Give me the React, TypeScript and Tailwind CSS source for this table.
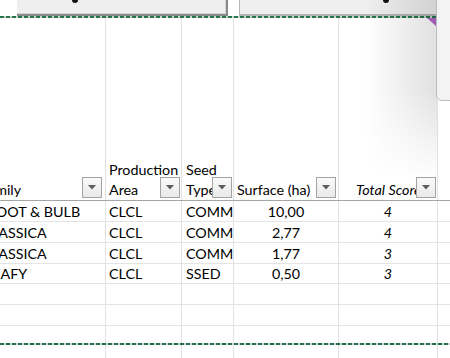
import React from 'react';

const rows = [
  { fam: 'ROOT & BULB', off: '-ml-[13px]', area: 'CLCL', seed: 'COMM', surf: '10,00', score: '4', h: 'h-[21px]' },
  { fam: 'BRASSICA', off: '-ml-[20px]', area: 'CLCL', seed: 'COMM', surf: '2,77', score: '4', h: 'h-[21px]' },
  { fam: 'BRASSICA', off: '-ml-[20px]', area: 'CLCL', seed: 'COMM', surf: '1,77', score: '3', h: 'h-[21px]' },
  { fam: 'LEAFY', off: '-ml-[15px]', area: 'CLCL', seed: 'SSED', surf: '0,50', score: '3', h: 'h-[20px]' },
];

const dashed =
  'bg-[repeating-linear-gradient(90deg,#25744a_0px,#25744a_4px,#c9d6cf_4px,#c9d6cf_6px)]';

function FilterButton({ className = '' }: { className?: string }) {
  return (
    <div
      className={`absolute bottom-[2px] w-[20px] h-[21px] border border-[#a3a3a3] bg-gradient-to-b from-[#fafafa] to-[#e9e9e9] flex items-center justify-center ${className}`}
    >
      <svg width="8" height="5" viewBox="0 0 8 5">
        <path d="M0 0h8L4 4.5z" fill="#5c5c5c" />
      </svg>
    </div>
  );
}

export default function App() {
  return (
    <div className="relative w-[450px] h-[358px] overflow-hidden bg-white font-['Lato',sans-serif] text-[14.3px] text-black">
      {/* Top buttons */}
      <div className="flex h-[16px]">
        <div className="ml-[17px] w-[211px] h-[16px] bg-[#efefef] border-r-2 border-b-2 border-[#8a8a8a] shadow-[inset_-1px_-1px_0_#d6d6d6]">
          <div className="ml-[55px] w-[6px] h-[3px] rounded-b-full bg-[#111]" />
        </div>
        <div className="ml-[11px] w-[198px] h-[16px] bg-[#efefef] border-l border-b-2 border-[#b5b5b5]">
          <div className="ml-[143px] w-[6px] h-[3px] rounded-b-full bg-[#111]" />
        </div>
      </div>
      <div className={`h-[2px] w-[437px] ${dashed}`} />

      {/* Grid */}
      <div className="flex flex-col">
        {/* Header row */}
        <div className="flex h-[183px] border-b border-[#a6a6a6] leading-[20px]">
          <div className="relative w-[106px] shrink-0 border-r border-[#e1e1e1] flex items-end overflow-hidden">
            <span className="-ml-[19px] whitespace-nowrap">Family</span>
            <FilterButton className="right-[3px]" />
          </div>
          <div className="relative w-[76px] shrink-0 border-r border-[#e1e1e1] flex items-end pl-[3px]">
            <span>
              Production
              <br />
              Area
            </span>
            <FilterButton className="right-[1px]" />
          </div>
          <div className="relative w-[52px] shrink-0 border-r border-[#e1e1e1] flex items-end pl-[4px] overflow-hidden">
            <span>
              Seed
              <br />
              Type
            </span>
            <FilterButton className="right-[1px]" />
          </div>
          <div className="relative w-[105px] shrink-0 border-r border-[#e1e1e1] flex items-end pl-[3px]">
            <span className="whitespace-nowrap">Surface (ha)</span>
            <FilterButton className="right-[2px]" />
          </div>
          <div className="relative w-[99px] shrink-0 border-r border-[#e1e1e1] flex items-end justify-center">
            <span className="italic whitespace-nowrap pl-[1px]">Total Score</span>
            <FilterButton className="right-[1px]" />
          </div>
          <div className="flex-1" />
        </div>

        {/* Data rows */}
        {rows.map((r, i) => (
          <div key={i} className={`flex ${r.h} border-b border-[#e4e4e4] leading-[20px]`}>
            <div className="w-[106px] shrink-0 border-r border-[#e1e1e1] flex items-center overflow-hidden pt-[1px]">
              <span className={`${r.off} whitespace-nowrap`}>{r.fam}</span>
            </div>
            <div className="w-[76px] shrink-0 border-r border-[#e1e1e1] flex items-center pl-[3px] pt-[1px]">
              {r.area}
            </div>
            <div className="w-[52px] shrink-0 border-r border-[#e1e1e1] flex items-center pl-[4px] pt-[1px] overflow-hidden">
              {r.seed}
            </div>
            <div className="w-[105px] shrink-0 border-r border-[#e1e1e1] flex items-center justify-center pt-[1px]">
              {r.surf}
            </div>
            <div className="w-[99px] shrink-0 border-r border-[#e1e1e1] flex items-center justify-center italic pt-[1px]">
              {r.score}
            </div>
            <div className="flex-1" />
          </div>
        ))}

        {/* Empty rows */}
        {['h-[21px] border-b', 'h-[21px] border-b', 'h-[40px]'].map((c, i) => (
          <div key={i} className={`flex ${c} border-[#e4e4e4]`}>
            <div className="w-[106px] shrink-0 border-r border-[#e1e1e1]" />
            <div className="w-[76px] shrink-0 border-r border-[#e1e1e1]" />
            <div className="w-[52px] shrink-0 border-r border-[#e1e1e1]" />
            <div className="w-[105px] shrink-0 border-r border-[#e1e1e1]" />
            <div className="w-[99px] shrink-0 border-r border-[#e1e1e1]" />
            <div className="flex-1" />
          </div>
        ))}
      </div>

      {/* Copy marquee bottom edge */}
      <div className={`absolute left-0 top-[343px] h-[2px] w-[450px] ${dashed}`} />

      {/* Panel shadow */}
      <div className="absolute left-[365px] top-0 w-[72px] h-[180px] bg-gradient-to-r from-transparent to-[rgba(0,0,0,0.12)] [mask-image:linear-gradient(to_bottom,black_50%,transparent)]" />

      {/* Purple corner marker */}
      <svg className="absolute left-[427px] top-[18px]" width="9" height="8" viewBox="0 0 9 8">
        <path d="M0 0H9V8Z" fill="#a05bb5" />
      </svg>

      {/* Floating pane edge */}
      <div className="absolute left-[436px] -top-[2px] w-[24px] h-[103px] rounded-bl-[6px] border border-[#bcbcbc] bg-[#f3f3f3]" />
    </div>
  );
}
